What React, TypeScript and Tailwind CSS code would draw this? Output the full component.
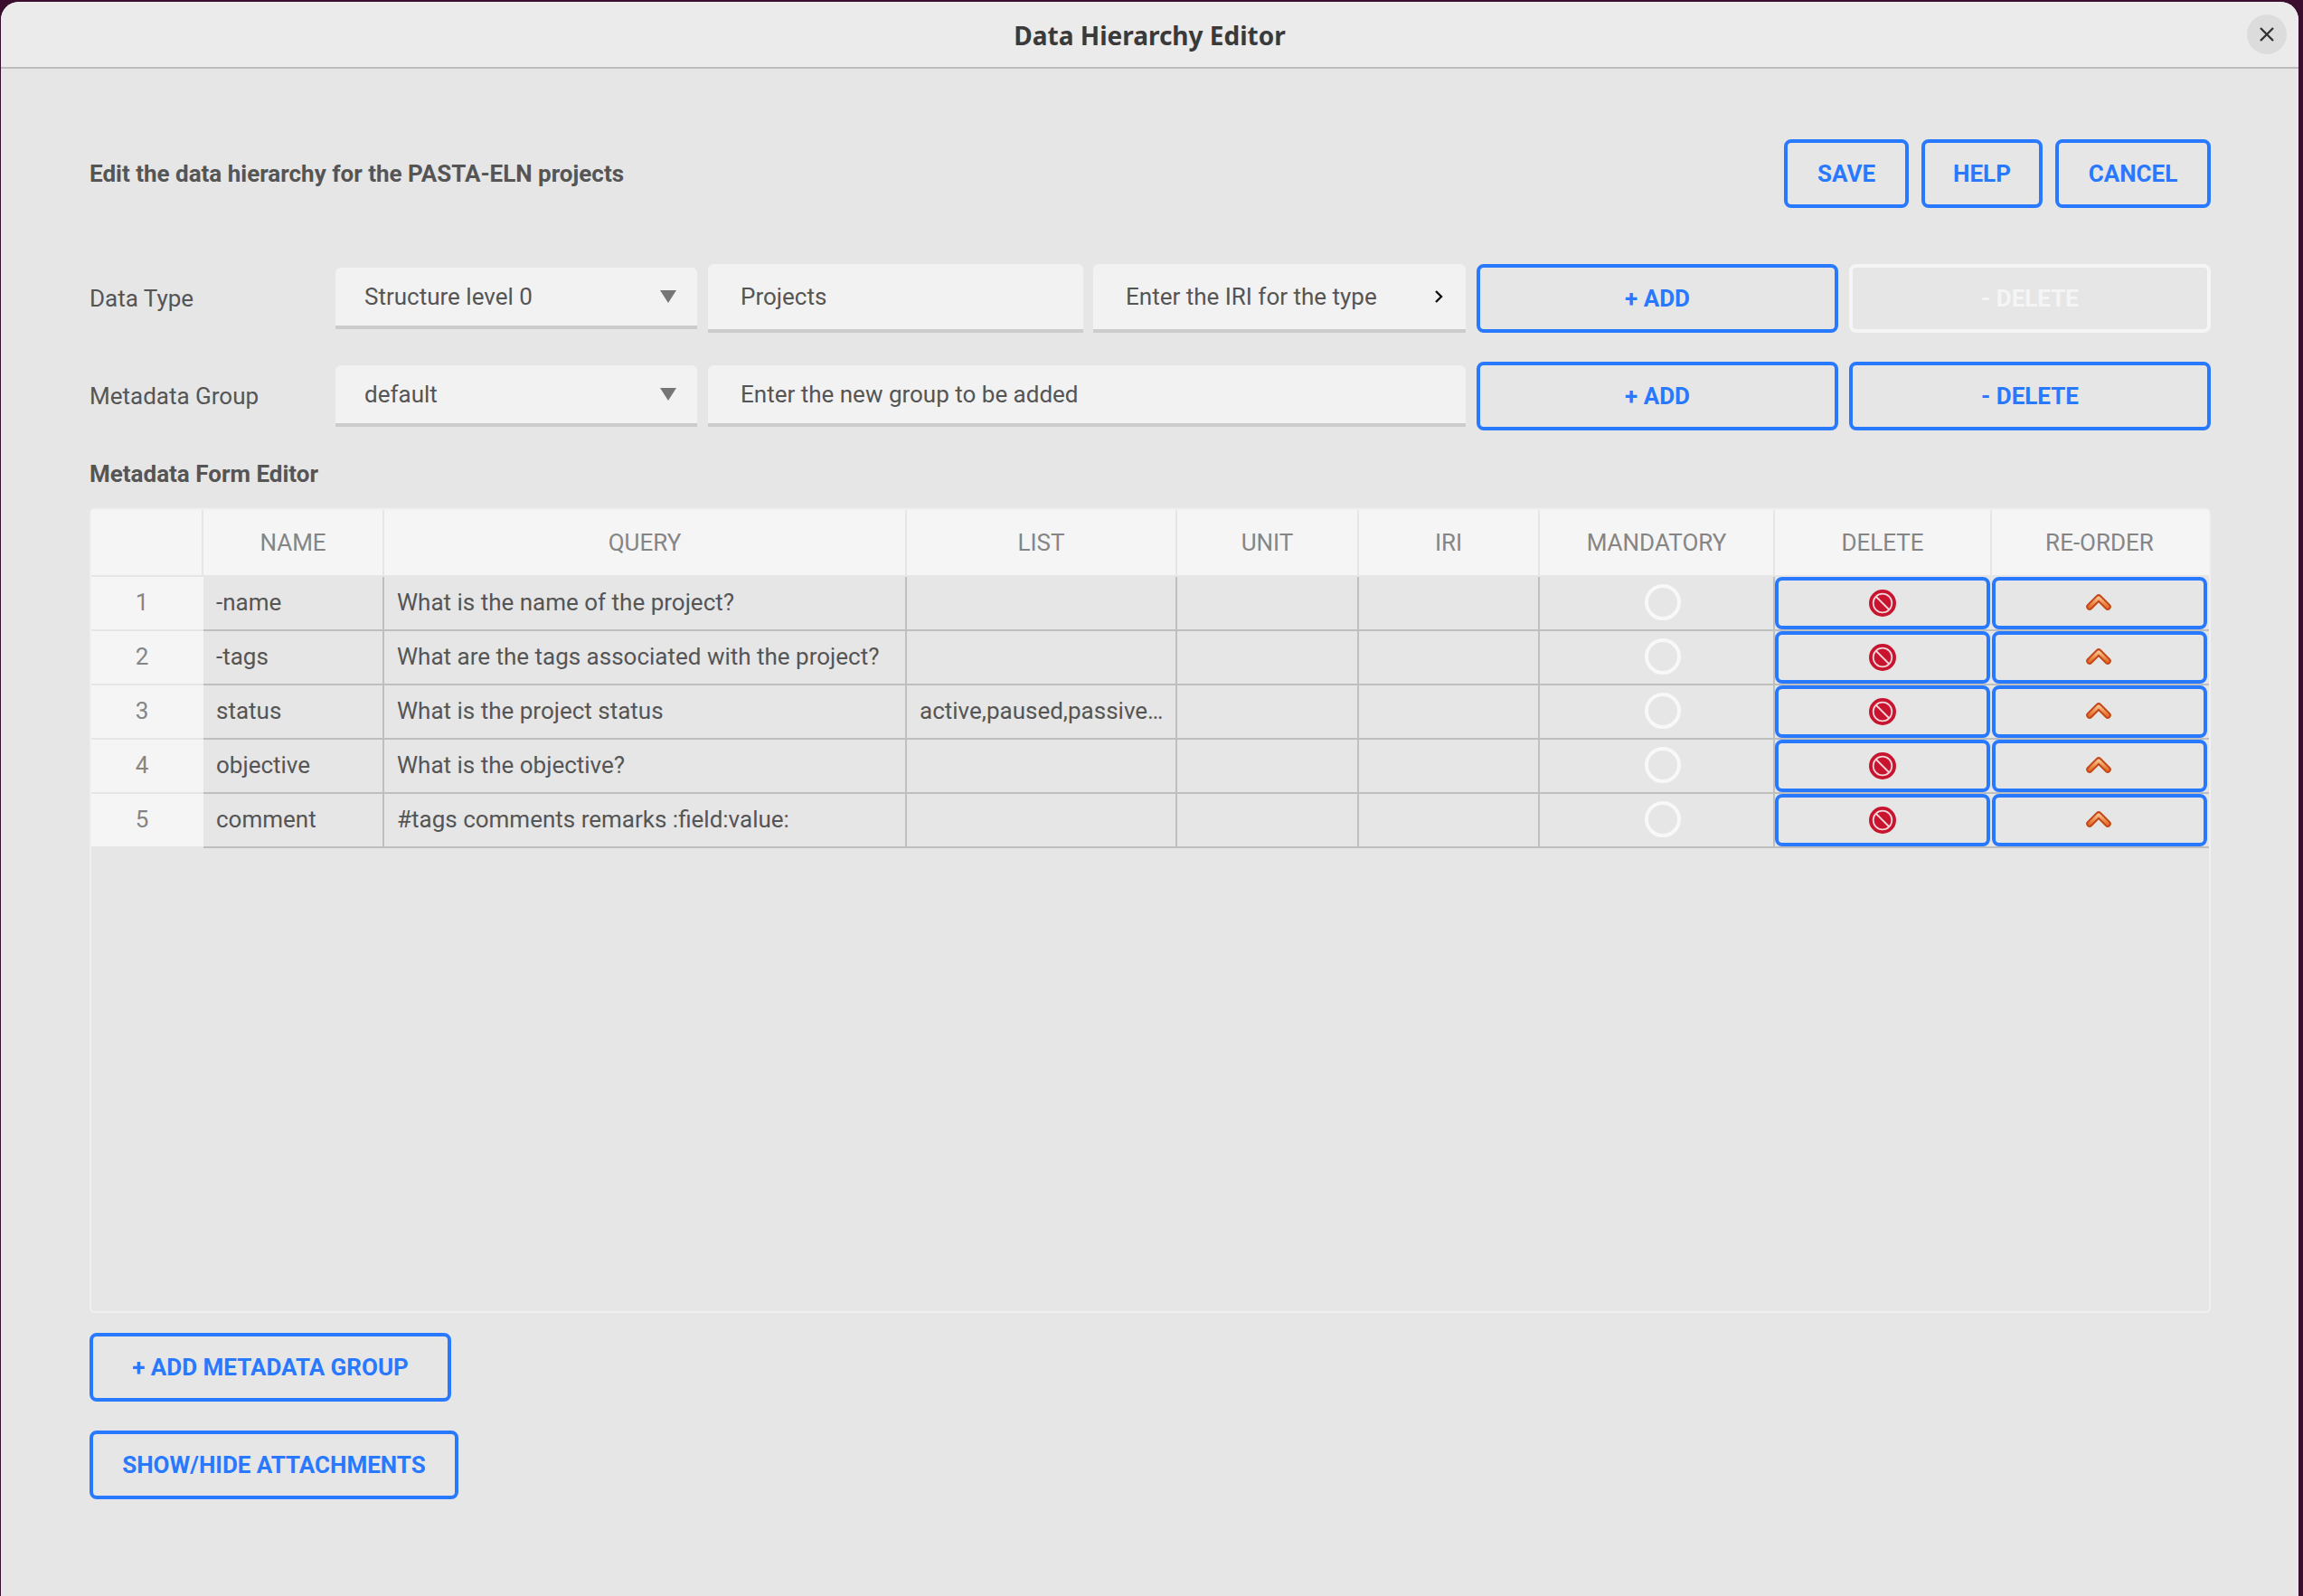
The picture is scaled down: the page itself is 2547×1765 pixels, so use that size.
import React from 'react'

const ROWS = [
  { name: '-name', query: 'What is the name of the project?', list: '' },
  { name: '-tags', query: 'What are the tags associated with the project?', list: '' },
  { name: 'status', query: 'What is the project status', list: 'active,paused,passive…' },
  { name: 'objective', query: 'What is the objective?', list: '' },
  { name: 'comment', query: '#tags comments remarks :field:value:', list: '' }
]

const GRID = 'grid grid-cols-[124px_200px_578px_299px_201px_200px_260px_240px_240px]'

function Button({ children, className = '', disabled = false }: { children: React.ReactNode; className?: string; disabled?: boolean }) {
  return (
    <button
      className={`h-[76px] shrink-0 rounded-lg border-4 text-[26px] font-bold ${disabled ? 'border-[#f5f5f5] text-[#f5f5f5]' : 'border-[#2979ff] text-[#2979ff]'} ${className}`}
    >
      {children}
    </button>
  )
}

function Arrow() {
  return (
    <svg width="18" height="14" viewBox="0 0 18 14" className="shrink-0">
      <path d="M0 0h18L9 14z" fill="#757575" />
    </svg>
  )
}

function Select({ value }: { value: string }) {
  return (
    <div className="flex h-[68px] w-[400px] shrink-0 items-center justify-between rounded-t-md border-b-4 border-[#cccccc] bg-[#f2f2f2] pl-8 pr-[23px]">
      <span>{value}</span>
      <Arrow />
    </div>
  )
}

function NoEntry() {
  return (
    <svg width="30" height="30" viewBox="0 0 30 30">
      <circle cx="15" cy="15" r="15" fill="#c8142f" />
      <circle cx="15" cy="15" r="10.3" fill="none" stroke="#f3d5da" strokeWidth="1.8" />
      <path d="M8 8l14 14" stroke="#f3d5da" strokeWidth="1.8" />
    </svg>
  )
}

function ChevronUp() {
  return (
    <svg width="28" height="18" viewBox="0 0 28 18">
      <defs>
        <linearGradient id="chevron-fill" x1="0" y1="0" x2="0" y2="1">
          <stop offset="0" stopColor="#f7c08a" />
          <stop offset="1" stopColor="#e8702a" />
        </linearGradient>
      </defs>
      <path d="M4 14L14 4l10 10" fill="none" stroke="#c4481a" strokeWidth="7.5" strokeLinecap="round" strokeLinejoin="round" />
      <path d="M4 14L14 4l10 10" fill="none" stroke="url(#chevron-fill)" strokeWidth="3.5" strokeLinecap="round" strokeLinejoin="round" />
    </svg>
  )
}

export default function App() {
  return (
    <div className="h-[1765px] w-[2547px] overflow-hidden bg-[#3b0d2e] pl-px pr-[5px] pt-0.5 font-['Roboto',sans-serif] text-[26px] text-[#555555]">
      <div className="h-full rounded-t-[20px] bg-[#e6e6e6]">
        <header className="relative flex h-[74px] items-center justify-center rounded-t-[20px] border-b-2 border-[#bdbdbd] bg-[#ebebeb] pt-px">
          <h1 className="font-['Noto_Sans',sans-serif] text-[28px] font-bold text-[#3a3a3a]">Data Hierarchy Editor</h1>
          <button className="absolute right-[13px] top-[14px] flex h-[44px] w-[44px] items-center justify-center rounded-full bg-[#dcdcdc]">
            <svg width="16" height="16" viewBox="0 0 16 16">
              <path d="M1 1l14 14M15 1L1 15" stroke="#333333" strokeWidth="2.4" />
            </svg>
          </button>
        </header>

        <main className="pl-[98px] pr-[97px] pt-[78px]">
          <div className="flex items-center justify-between">
            <h2 className="font-bold">Edit the data hierarchy for the PASTA-ELN projects</h2>
            <div className="flex gap-[14px]">
              <Button className="w-[138px]">SAVE</Button>
              <Button className="w-[134px]">HELP</Button>
              <Button className="w-[172px]">CANCEL</Button>
            </div>
          </div>

          <div className="mt-[62px] flex items-center">
            <span className="w-[272px] shrink-0">Data Type</span>
            <Select value="Structure level 0" />
            <div className="ml-3 flex h-[76px] w-[415px] shrink-0 items-center rounded-t-md border-b-4 border-[#cccccc] bg-[#f2f2f2] pl-9">Projects</div>
            <div className="ml-[11px] flex h-[76px] w-[412px] shrink-0 items-center justify-between rounded-t-md border-b-4 border-[#cccccc] bg-[#f2f2f2] pl-9 pr-[25px]">
              <span>Enter the IRI for the type</span>
              <svg width="10" height="16" viewBox="0 0 10 16">
                <path d="M2 2l6 6-6 6" fill="none" stroke="#111111" strokeWidth="2.4" />
              </svg>
            </div>
            <Button className="ml-3 w-[400px]">+ ADD</Button>
            <Button disabled className="ml-3 w-[400px]">- DELETE</Button>
          </div>

          <div className="mt-8 flex items-center">
            <span className="w-[272px] shrink-0">Metadata Group</span>
            <Select value="default" />
            <div className="ml-3 flex h-[68px] w-[838px] shrink-0 items-center rounded-t-md border-b-4 border-[#cccccc] bg-[#f2f2f2] pl-9">Enter the new group to be added</div>
            <Button className="ml-3 w-[400px]">+ ADD</Button>
            <Button className="ml-3 w-[400px]">- DELETE</Button>
          </div>

          <h3 className="mt-8 font-bold leading-[32px]">Metadata Form Editor</h3>

          <div className="mt-[22px] h-[890px] w-[2346px] rounded-md border-2 border-[#f0f0f0]">
            <div className={`${GRID} h-[74px] border-b-2 border-[#e6e6e6] bg-[#f5f5f5] text-[#858585]`}>
              {['', 'NAME', 'QUERY', 'LIST', 'UNIT', 'IRI', 'MANDATORY', 'DELETE', 'RE-ORDER'].map((title, i) => (
                <div key={i} className={`flex items-center justify-center ${i < 8 ? 'border-r-2 border-[#e6e6e6]' : 'pr-0.5'}`}>
                  {title}
                </div>
              ))}
            </div>
            {ROWS.map((row, i) => (
              <div key={row.name} className={`${GRID} h-[60px]`}>
                <div className="flex items-center justify-center border-b-2 border-[#e6e6e6] bg-[#f5f5f5] pb-0.5 pr-3 text-[#858585]">{i + 1}</div>
                <div className="flex items-center border-b-2 border-r-2 border-[#bfbfbf] px-[14px] pb-0.5">{row.name}</div>
                <div className="flex items-center border-b-2 border-r-2 border-[#bfbfbf] px-[14px] pb-0.5">{row.query}</div>
                <div className="flex items-center border-b-2 border-r-2 border-[#bfbfbf] pb-0.5 pl-[14px]">{row.list}</div>
                <div className="border-b-2 border-r-2 border-[#bfbfbf]" />
                <div className="border-b-2 border-r-2 border-[#bfbfbf]" />
                <div className="flex items-center justify-center border-b-2 border-r-2 border-[#bfbfbf] pb-0.5 pl-3.5">
                  <div className="h-10 w-10 rounded-full border-4 border-[#f8f8f8]" />
                </div>
                <div className="border-b-2 border-[#bfbfbf]">
                  <button className="flex h-[58px] w-[238px] items-center justify-center rounded-lg border-4 border-[#2979ff]">
                    <NoEntry />
                  </button>
                </div>
                <div className="border-b-2 border-[#bfbfbf]">
                  <button className="flex h-[58px] w-[238px] items-center justify-center rounded-lg border-4 border-[#2979ff] pb-0.5 pr-0.5">
                    <ChevronUp />
                  </button>
                </div>
              </div>
            ))}
          </div>

          <Button className="mt-[22px] block w-[400px]">+ ADD METADATA GROUP</Button>
          <Button className="mt-8 block w-[408px]">SHOW/HIDE ATTACHMENTS</Button>
        </main>
      </div>
    </div>
  )
}
